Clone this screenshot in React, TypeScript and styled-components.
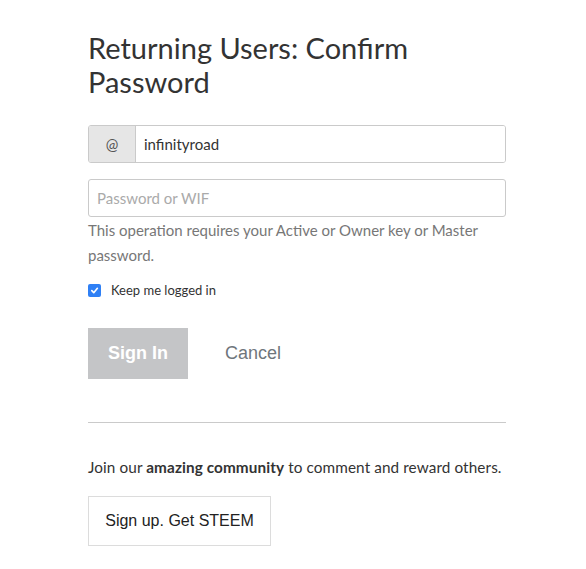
import React from "react";
import styled, { createGlobalStyle } from "styled-components";

const Global = createGlobalStyle`
  html, body { margin: 0; padding: 0; background: #fff; }
  body { font-family: Lato, "Noto Sans", sans-serif; color: #333; }
  * { box-sizing: border-box; }
`;

const Page = styled.div`
  width: 586px;
  padding: 31px 0 0 88px;
`;

const Form = styled.form`
  width: 418px;
  display: flex;
  flex-direction: column;
`;

const Title = styled.h3`
  margin: 0 0 26px;
  font-size: 29px;
  line-height: 34px;
  font-weight: 400;
  color: #333;
`;

const InputGroup = styled.div`
  display: flex;
  flex: none;
  height: 38px;
  border: 1px solid #cacaca;
  border-radius: 3px;
  overflow: hidden;
  margin-bottom: 16px;
`;

const Addon = styled.span`
  width: 47px;
  flex: none;
  display: flex;
  align-items: center;
  justify-content: center;
  background: #e6e6e6;
  border-right: 1px solid #cacaca;
  font-size: 15px;
  color: #555;
`;

const Field = styled.input<{ $bordered?: boolean }>`
  flex: ${(p) => (p.$bordered ? "none" : "1")};
  width: 100%;
  height: ${(p) => (p.$bordered ? "38px" : "100%")};
  border: ${(p) => (p.$bordered ? "1px solid #cacaca" : "none")};
  border-radius: ${(p) => (p.$bordered ? "3px" : "0")};
  padding: 0 8px;
  font-family: inherit;
  font-size: 15px;
  color: #333;
  outline: none;
  background: #fff;
  &::placeholder { color: #aaa; }
`;

const Help = styled.p`
  margin: 1px 0 0;
  font-size: 15px;
  line-height: 25px;
  color: #777;
`;

const CheckRow = styled.label`
  display: flex;
  align-items: center;
  gap: 10px;
  margin-top: 14px;
  font-size: 13px;
  color: #333;
`;

const Box = styled.span`
  width: 13px;
  height: 13px;
  border-radius: 2px;
  background: #2f80f5;
  display: flex;
  align-items: center;
  justify-content: center;
`;

const Actions = styled.div`
  display: flex;
  align-items: center;
  gap: 37px;
  margin-top: 30px;
`;

const Primary = styled.button`
  width: 100px;
  height: 51px;
  border: none;
  background: #c4c5c7;
  color: #fff;
  font-family: "Liberation Sans", Arial, sans-serif;
  font-weight: 700;
  font-size: 18px;
  padding: 0;
`;

const Link = styled.button`
  border: none;
  background: none;
  padding: 0;
  font-family: "Liberation Sans", Arial, sans-serif;
  font-size: 18px;
  color: #6f767c;
`;

const Rule = styled.hr`
  width: 418px;
  margin: 43px 0 0;
  border: none;
  border-top: 1px solid #cacaca;
`;

const Join = styled.p`
  margin: 34px 0 0;
  font-size: 15.3px;
  letter-spacing: 0.1px;
  line-height: 20px;
  color: #333;
  b { font-weight: 700; }
`;

const Secondary = styled.button`
  align-self: flex-start;
  margin-top: 19px;
  width: 183px;
  height: 50px;
  border: 1px solid #dcdcdc;
  background: #fff;
  font-family: "Liberation Sans", Arial, sans-serif;
  font-size: 16px;
  color: #222;
  padding: 0;
`;

export default function App() {
  return (
    <>
      <Global />
      <Page>
        <Form onSubmit={(e) => e.preventDefault()}>
          <Title>Returning Users: Confirm Password</Title>
          <InputGroup>
            <Addon>@</Addon>
            <Field defaultValue="infinityroad" />
          </InputGroup>
          <Field $bordered type="password" placeholder="Password or WIF" />
          <Help>This operation requires your Active or Owner key or Master password.</Help>
          <CheckRow>
            <Box>
              <svg width="9" height="9" viewBox="0 0 10 10">
                <path d="M2 5.2 L4.2 7.4 L8.2 2.6" stroke="#fff" strokeWidth="1.8" fill="none" strokeLinecap="round" strokeLinejoin="round" />
              </svg>
            </Box>
            Keep me logged in
          </CheckRow>
          <Actions>
            <Primary type="button">Sign In</Primary>
            <Link type="button">Cancel</Link>
          </Actions>
          <Rule />
          <Join>
            Join our <b>amazing community</b> to comment and reward others.
          </Join>
          <Secondary type="button">Sign up. Get STEEM</Secondary>
        </Form>
      </Page>
    </>
  );
}
